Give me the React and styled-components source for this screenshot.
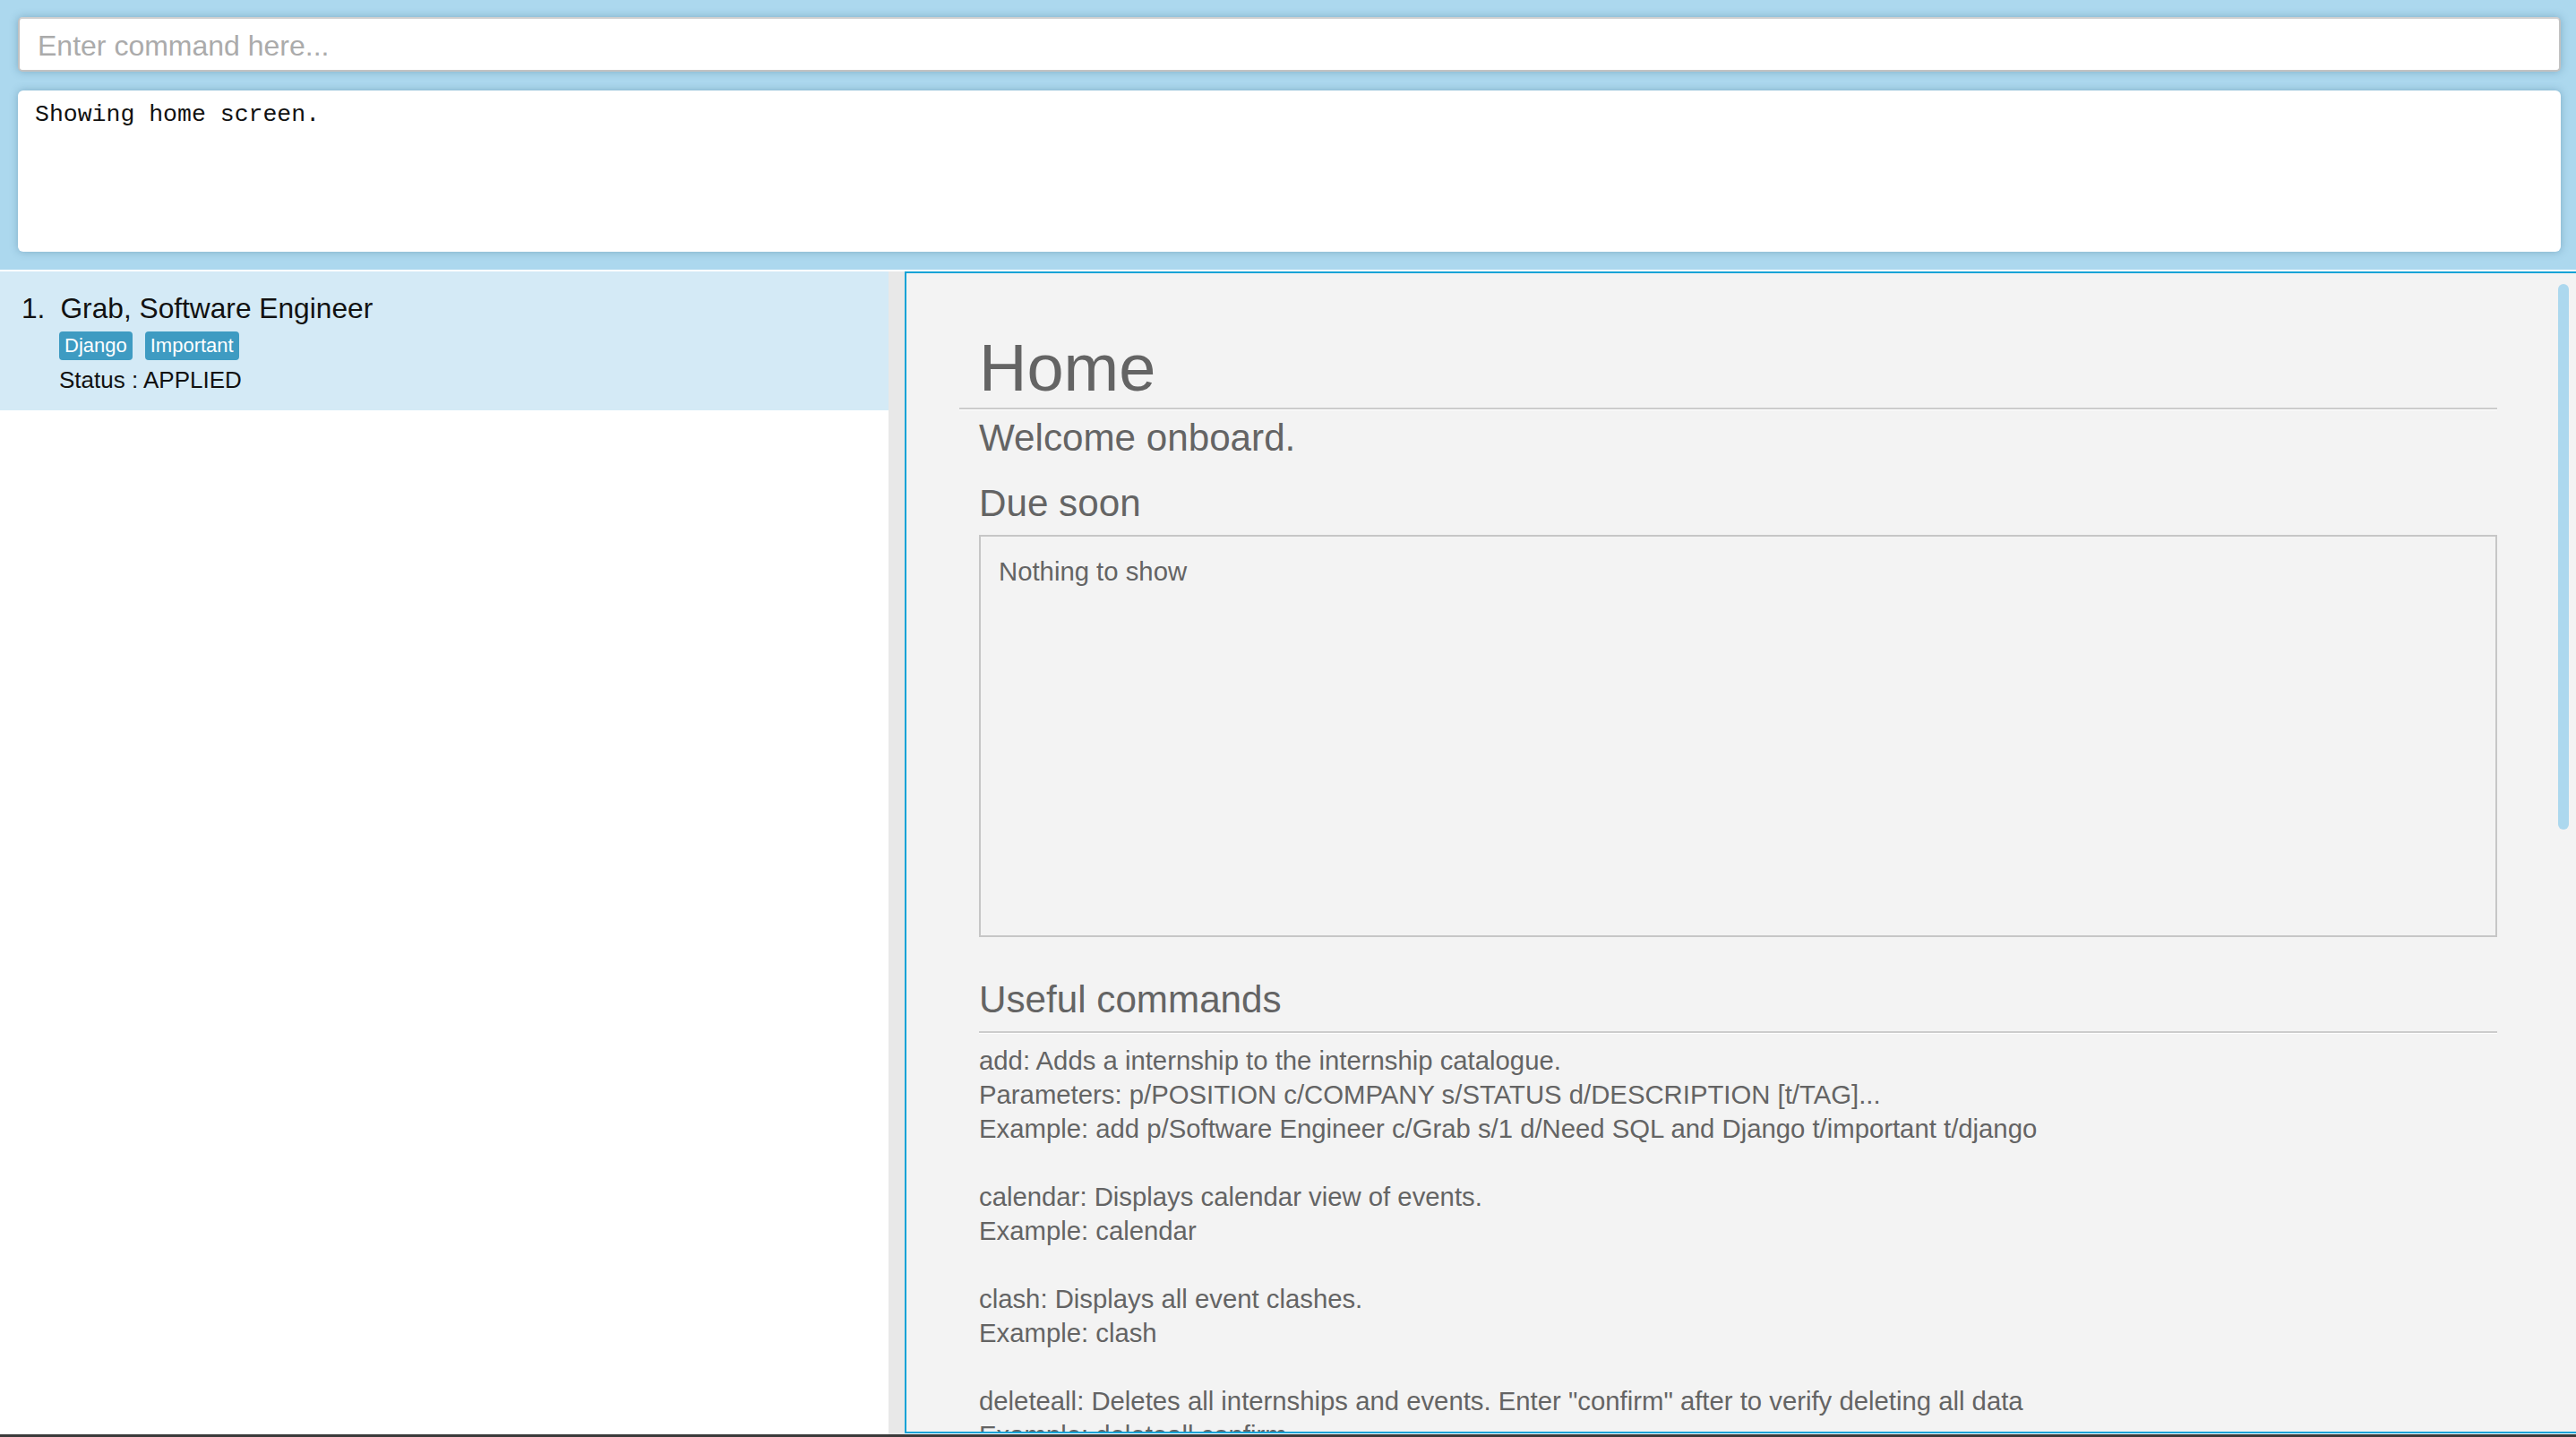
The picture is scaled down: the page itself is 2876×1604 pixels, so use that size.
import React from "react";
import styled, { createGlobalStyle } from "styled-components";

const GlobalStyle = createGlobalStyle`
  html, body {
    margin: 0;
    padding: 0;
    height: 100%;
  }
  body {
    font-family: "Liberation Sans", Arial, sans-serif;
    overflow: hidden;
  }
  #root {
    height: 100%;
  }
`;

const Window = styled.div`
  display: flex;
  flex-direction: column;
  height: 100vh;
  background: #ffffff;
`;

const TopArea = styled.div`
  flex-shrink: 0;
  display: flex;
  flex-direction: column;
  gap: 21px;
  padding: 19px 17px 20px 20px;
  background: #acd8ee;
  border-bottom: 2px solid #ffffff;
`;

const CommandInput = styled.input`
  box-sizing: border-box;
  height: 61px;
  width: 100%;
  padding: 4px 20px 0;
  border: 2px solid #c2c2c2;
  border-top-color: #cfcfcf;
  border-radius: 5px;
  background: #ffffff;
  box-shadow: 0 0 10px rgba(40, 90, 120, 0.35);
  font-family: "Liberation Sans", Arial, sans-serif;
  font-size: 32px;
  color: #222;
  outline: none;

  &::placeholder {
    color: #ababab;
  }
`;

const ResultBox = styled.div`
  box-sizing: border-box;
  height: 180px;
  padding: 11px 19px;
  background: #ffffff;
  border-radius: 6px;
  box-shadow: 0 0 10px rgba(40, 90, 120, 0.35);
  font-family: "Liberation Mono", "Courier New", monospace;
  font-size: 26.5px;
  line-height: 32px;
  color: #111;
  white-space: pre-wrap;
`;

const Main = styled.div`
  flex: 1;
  display: flex;
  min-height: 0;
`;

const ListPane = styled.div`
  width: 992px;
  flex-shrink: 0;
  background: #ffffff;
  display: flex;
  flex-direction: column;
`;

const Card = styled.div`
  display: flex;
  flex-direction: column;
  padding: 21px 24px 17px;
  background: #d4eaf6;
  color: #111;
`;

const TitleRow = styled.div`
  display: flex;
  gap: 17px;
  font-size: 31.7px;
  line-height: 40px;
`;

const Tags = styled.div`
  display: flex;
  gap: 14px;
  margin: 6px 0 0 42px;
`;

const Tag = styled.span`
  height: 32px;
  line-height: 32px;
  padding: 0 6px;
  border-radius: 4px;
  background: #3e9bc2;
  color: #ffffff;
  font-size: 22px;
`;

const Status = styled.div`
  margin: 5px 0 0 42px;
  font-size: 26px;
  line-height: 34px;
`;

const Divider = styled.div`
  width: 18px;
  flex-shrink: 0;
  background: #e8e8e8;
`;

const HomePanel = styled.div`
  position: relative;
  flex: 1;
  box-sizing: border-box;
  margin-bottom: 1px;
  padding: 69px 88px 0 59px;
  overflow: hidden;
  background: #f3f3f3;
  border: 2px solid #0aa2d6;
  border-right: none;
  color: #646464;
`;

const HomeTitle = styled.h1`
  margin: 0;
  padding-left: 22px;
  font-size: 74px;
  line-height: 74px;
  font-weight: normal;
`;

const Separator = styled.div`
  margin-top: ${(p) => p.$gap}px;
  border-top: 2px solid #cccccc;
  border-bottom: 1px solid #ffffff;
`;

const Body = styled.div`
  margin-left: 22px;
  display: flex;
  flex-direction: column;
`;

const Heading = styled.h2`
  margin: ${(p) => p.$gap}px 0 0;
  font-size: 42.2px;
  line-height: 42px;
  font-weight: normal;
`;

const DueBox = styled.div`
  box-sizing: border-box;
  height: 449px;
  margin-top: 14px;
  padding: 20px;
  border: 2px solid #c6c6c6;
  font-size: 29.3px;
  line-height: 38px;
`;

const CommandList = styled.div`
  margin-top: 11px;
  display: flex;
  flex-direction: column;
  gap: 38px;
  font-size: 29.3px;
  line-height: 38px;
`;

const CommandGroup = styled.div`
  display: flex;
  flex-direction: column;
`;

const Line = styled.div`
  white-space: nowrap;
`;

const ScrollThumb = styled.div`
  position: absolute;
  top: 12px;
  right: 8px;
  width: 12px;
  height: 609px;
  border-radius: 6px;
  background: #acd8ee;
`;

const StatusBar = styled.div`
  height: 3px;
  flex-shrink: 0;
  background: #3a3a3a;
`;

const commands = [
  [
    "add: Adds a internship to the internship catalogue.",
    "Parameters: p/POSITION c/COMPANY s/STATUS d/DESCRIPTION [t/TAG]...",
    "Example: add p/Software Engineer c/Grab s/1 d/Need SQL and Django t/important t/django",
  ],
  ["calendar: Displays calendar view of events.", "Example: calendar"],
  ["clash: Displays all event clashes.", "Example: clash"],
  [
    'deleteall: Deletes all internships and events. Enter "confirm" after to verify deleting all data',
    "Example: deleteall confirm",
  ],
  ["help: Shows program usage instructions.", "Example: help"],
];

export default function App() {
  return (
    <>
      <GlobalStyle />
      <Window>
        <TopArea>
          <CommandInput placeholder="Enter command here..." />
          <ResultBox>Showing home screen.</ResultBox>
        </TopArea>
        <Main>
          <ListPane>
            <Card>
              <TitleRow>
                <span>1.</span>
                <span>Grab, Software Engineer</span>
              </TitleRow>
              <Tags>
                <Tag>Django</Tag>
                <Tag>Important</Tag>
              </Tags>
              <Status>Status : APPLIED</Status>
            </Card>
          </ListPane>
          <Divider />
          <HomePanel>
            <HomeTitle>Home</HomeTitle>
            <Separator $gap={7} />
            <Body>
              <Heading $gap={10}>Welcome onboard.</Heading>
              <Heading $gap={31}>Due soon</Heading>
              <DueBox>Nothing to show</DueBox>
              <Heading $gap={49}>Useful commands</Heading>
              <Separator $gap={14} />
              <CommandList>
                {commands.map((group, i) => (
                  <CommandGroup key={i}>
                    {group.map((l, j) => (
                      <Line key={j}>{l}</Line>
                    ))}
                  </CommandGroup>
                ))}
              </CommandList>
            </Body>
            <ScrollThumb />
          </HomePanel>
        </Main>
        <StatusBar />
      </Window>
    </>
  );
}
